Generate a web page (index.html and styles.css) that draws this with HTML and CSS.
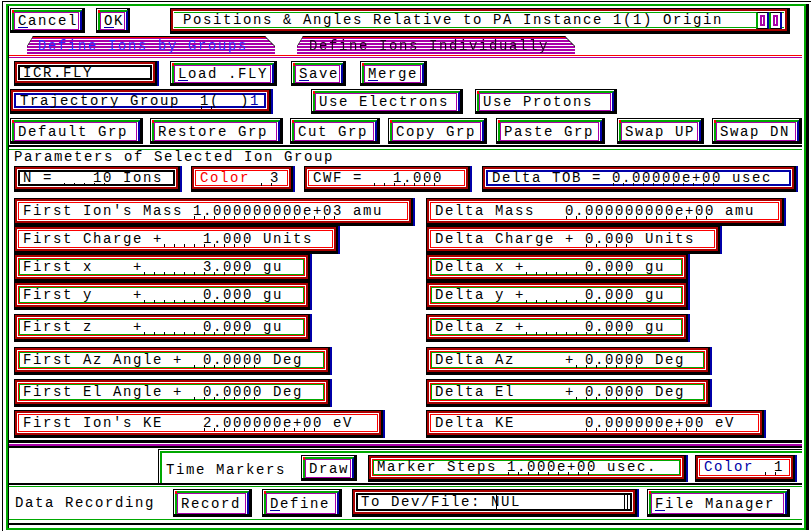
FILE: index.html
```html
<!DOCTYPE html>
<html>
<head>
<meta charset="utf-8">
<link rel="stylesheet" href="styles.css">
</head>
<body>
<div class="screen">
 <div class="frame">
  <div class="win">

   <div class="row r1">
    <div class="btn cancel"><div class="b2"><div class="b3"><span class="tx"><u>C</u>ancel</span></div></div></div>
    <div class="btn ok"><div class="b2"><div class="b3"><span class="tx"><u>O</u>K</span></div></div></div>
    <div class="title">
     <div class="ti">
      <div class="tin">
       <span class="tt">Positions &amp; Angles Relative to PA Instance 1(1) Origin</span>
       <span class="ic"><i></i></span><span class="ic"><i></i></span>
      </div>
     </div>
    </div>
   </div>

   <div class="row tabs">
    <div class="tab t1"><span>Define Ions by Groups</span></div>
    <div class="tab t2"><span>Define Ions Individually</span></div>
   </div>
   <div class="tabline"></div>

   <div class="row r3">
    <div class="fld k icr"><div class="f2"><div class="f3"><span class="tx">ICR.FLY</span></div></div></div>
    <div class="btn load"><div class="b2"><div class="b3"><span class="tx"><u>L</u>oad .FLY</span></div></div></div>
    <div class="btn save"><div class="b2"><div class="b3"><span class="tx"><u>S</u>ave</span></div></div></div>
    <div class="btn merge"><div class="b2"><div class="b3"><span class="tx"><u>M</u>erge</span></div></div></div>
   </div>

   <div class="row r4">
    <div class="fld bl traj"><div class="f2"><div class="f3"><span class="tx">Trajectory Group  <span class="t">1(</span>  )<span class="blue">1</span></span></div></div></div>
    <div class="btn elec"><div class="b2"><div class="b3"><span class="tx">Use Electrons</span></div></div></div>
    <div class="btn prot"><div class="b2"><div class="b3"><span class="tx">Use Protons</span></div></div></div>
   </div>

   <div class="row r5">
    <div class="btn w133"><div class="b2"><div class="b3"><span class="tx">Default Grp</span></div></div></div>
    <div class="btn w133 g7"><div class="b2"><div class="b3"><span class="tx">Restore Grp</span></div></div></div>
    <div class="btn w90 g7"><div class="b2"><div class="b3"><span class="tx">Cut Grp</span></div></div></div>
    <div class="btn w99 g8"><div class="b2"><div class="b3"><span class="tx">Copy Grp</span></div></div></div>
    <div class="btn w109 g9"><div class="b2"><div class="b3"><span class="tx">Paste Grp</span></div></div></div>
    <div class="btn w87 g12"><div class="b2"><div class="b3"><span class="tx">Swap UP</span></div></div></div>
    <div class="btn w90 g8"><div class="b2"><div class="b3"><span class="tx">Swap DN</span></div></div></div>
   </div>

   <div class="sep1"></div>
   <div class="plabel">Parameters of Selected Ion Group</div>

   <div class="row rn">
    <div class="fld k nf"><div class="f2"><div class="f3"><span class="tx">N = <span class="t">   10</span> Ions</span></div></div></div>
    <div class="fld r colf"><div class="f2"><div class="f3"><span class="tx"><span class="red">Color</span> <span class="t"> 3</span></span></div></div></div>
    <div class="fld r cwf"><div class="f2"><div class="f3"><span class="tx">CWF = <span class="t">  1.000</span></span></div></div></div>
    <div class="fld bl tob"><div class="f2"><div class="f3"><span class="tx">Delta TOB = <span class="t">0.00000e+00</span> usec</span></div></div></div>
   </div>

   <div class="pair mass">
    <div class="fld r wl"><div class="f2"><div class="f3"><span class="tx">First Ion's Mass <span class="t">1.000000000e+03</span> amu</span></div></div></div>
    <div class="fld r wr"><div class="f2"><div class="f3"><span class="tx">Delta Mass   <span class="t">0.000000000e+00</span> amu</span></div></div></div>
   </div>
   <div class="pair chg">
    <div class="fld r wl"><div class="f2"><div class="f3"><span class="tx">First Charge +<span class="t">    1.000</span> Units</span></div></div></div>
    <div class="fld r wr"><div class="f2"><div class="f3"><span class="tx">Delta Charge + <span class="t">0.000</span> Units</span></div></div></div>
   </div>
   <div class="pair px">
    <div class="fld g wl"><div class="f2"><div class="f3"><span class="tx">First x    +<span class="t">      3.000</span> gu</span></div></div></div>
    <div class="fld g wr"><div class="f2"><div class="f3"><span class="tx">Delta x +<span class="t">      0.000</span> gu</span></div></div></div>
   </div>
   <div class="pair py">
    <div class="fld g wl"><div class="f2"><div class="f3"><span class="tx">First y    +<span class="t">      0.000</span> gu</span></div></div></div>
    <div class="fld g wr"><div class="f2"><div class="f3"><span class="tx">Delta y +<span class="t">      0.000</span> gu</span></div></div></div>
   </div>
   <div class="pair pz">
    <div class="fld g wl"><div class="f2"><div class="f3"><span class="tx">First z    +<span class="t">      0.000</span> gu</span></div></div></div>
    <div class="fld g wr"><div class="f2"><div class="f3"><span class="tx">Delta z +<span class="t">      0.000</span> gu</span></div></div></div>
   </div>
   <div class="pair az">
    <div class="fld g wl"><div class="f2"><div class="f3"><span class="tx">First Az Angle + <span class="t"> 0.0000</span> Deg</span></div></div></div>
    <div class="fld g wr"><div class="f2"><div class="f3"><span class="tx">Delta Az     +<span class="t"> 0.0000</span> Deg</span></div></div></div>
   </div>
   <div class="pair el">
    <div class="fld g wl"><div class="f2"><div class="f3"><span class="tx">First El Angle + <span class="t"> 0.0000</span> Deg</span></div></div></div>
    <div class="fld g wr"><div class="f2"><div class="f3"><span class="tx">Delta El     +<span class="t"> 0.0000</span> Deg</span></div></div></div>
   </div>
   <div class="pair ke">
    <div class="fld r wl"><div class="f2"><div class="f3"><span class="tx">First Ion's KE    <span class="t">2.000000e+00</span> eV</span></div></div></div>
    <div class="fld r wr"><div class="f2"><div class="f3"><span class="tx">Delta KE       <span class="t">0.000000e+00</span> eV</span></div></div></div>
   </div>

   <div class="sep2"></div>

   <div class="tm">
    <div class="tmp">
     <span class="lbl">Time Markers</span>
     <div class="btn draw"><div class="b2"><div class="b3"><span class="tx">Draw</span></div></div></div>
     <div class="fld g steps"><div class="f2"><div class="f3"><span class="tx">Marker Steps <span class="t">1.000e+00</span> usec.</span></div></div></div>
     <div class="fld r col1"><div class="f2"><div class="f3"><span class="tx"><span class="blue">Color</span> <span class="t"> 1</span></span></div></div></div>
    </div>
   </div>

   <div class="dr">
    <span class="lbl">Data Recording</span>
    <div class="btn rec"><div class="b2"><div class="b3"><span class="tx">Record</span></div></div></div>
    <div class="btn def"><div class="b2"><div class="b3"><span class="tx"><u>D</u>efine</span></div></div></div>
    <div class="fld k dev"><div class="f2"><div class="f3"><span class="tx">To Dev/File: <span class="cur">NUL</span></span><span class="endbars"></span></div></div></div>
    <div class="btn fm"><div class="b2"><div class="b3"><span class="tx"><u>F</u>ile Manager</span></div></div></div>
   </div>

  </div>
 </div>
</div>
</body>
</html>
```

FILE: styles.css
```css
:root {
  --g: #00a800;
  --b: #0000a8;
  --m: #a800a8;
  --dr: #a80000;
  --r: #fc0000;
}
* { box-sizing: border-box; }
body {
  margin: 0;
  background: #fff;
  color: #000;
  font-family: "Liberation Mono", "DejaVu Sans Mono", monospace;
  font-size: 14px;
  letter-spacing: 1.6px;
}
.screen {
  width: 811px;
  height: 531px;
  overflow: hidden;
  padding-left: 2px;
  padding-top: 1px;
}
.frame {
  height: 100%;
  border-left: 1px solid #000;
  border-top: 1px solid #000;
  padding: 2px 0 0 3px;
}
.win {
  width: 800px;
  height: 526px;
  border: 2px solid var(--g);
  box-shadow: inset 1px 0 0 #000, 3px 0 0 #000;
  padding-left: 1px;
  display: flex;
  flex-direction: column;
}
.row { display: flex; flex: none; }
.tx { white-space: pre; }
.blue { color: var(--b); }
.red { color: var(--r); }
u { text-decoration: none; border-bottom: 1px solid var(--b); line-height: 11px; display: inline-block; }

/* ticks under values */
.t {
  background: repeating-linear-gradient(90deg, transparent 0 1px, #000 1px 2px, transparent 2px 10px) left bottom / 100% 3px no-repeat;
}

/* ------- buttons ------- */
.btn {
  display: flex;
  height: 100%;
  border: 1px solid #000;
  border-right-width: 3px;
  border-bottom-width: 3px;
  background: #fff;
  padding: 1px 0 0 1px;
}
.b2 {
  flex: 1;
  display: flex;
  border-top: 2px solid var(--g);
  border-left: 2px solid var(--g);
  border-right: 2px solid var(--b);
  padding-right: 1px;
  position: relative;
}
.b2::before {
  content: "";
  position: absolute;
  left: -2px;
  top: -2px;
  width: 2px;
  height: 3px;
  background: var(--r);
}
.b3 {
  flex: 1;
  display: flex;
  align-items: center;
  border: 1px solid var(--m);
  padding-left: 3px;
}

/* ------- fields ------- */
.fld {
  display: flex;
  height: 100%;
  border: 1px solid #000;
  border-right-width: 2px;
  border-bottom-width: 3px;
  box-shadow: 2px 0 0 var(--b);
  background: #fff;
}
.f2 {
  flex: 1;
  display: flex;
  border: 2px solid var(--dr);
  padding: 1px;
}
.f3 {
  flex: 1;
  display: flex;
  align-items: center;
  border: 1px solid var(--r);
  padding-left: 4px;
}
.fld.k .f3 { border: 2px solid #000; padding-left: 3px; }
.fld.g .f3 { border: 1px solid var(--r); box-shadow: inset 0 0 0 1px var(--g); padding-left: 4px; }
.fld.bl .f3 { border: 2px solid var(--b); padding-left: 4px; }

/* ------- row 1 ------- */
.r1 { height: 26px; margin-top: 2px; }
.cancel { width: 75px; margin-left: 1px; height: 25px; }
.ok { width: 34px; margin-left: 11px; height: 25px; }
.title {
  width: 620px;
  margin-left: 40px;
  border: 1px solid #000;
  border-right-width: 3px;
  border-bottom-width: 3px;
  display: flex;
}
.ti { flex: 1; display: flex; border: 2px solid var(--dr); padding: 1px; }
.tin {
  flex: 1;
  display: flex;
  align-items: center;
  border-top: 1px solid var(--g);
  border-bottom: 1px solid var(--g);
  padding-left: 9px;
  padding-right: 2px;
}
.tt { flex: 1; white-space: pre; }
.ic {
  width: 13px;
  height: 17px;
  border: 1px solid #000;
  border-left: 2px solid var(--g);
  border-right: 2px solid var(--b);
  background: #fff;
  padding: 2px 2px;
  display: flex;
}
.ic i { flex: 1; border: 2px solid var(--m); }

/* ------- tabs ------- */
.tabs {
  height: 18px;
  margin-top: 3px;
  filter: drop-shadow(0 -1px 0 #000);
}
.tab {
  height: 18px;
  clip-path: polygon(6px 0, calc(100% - 10px) 0, 100% 10px, 100% 100%, 0 100%, 0 10px);
  background:
    linear-gradient(var(--r), var(--r)) top / 100% 1px no-repeat,
    repeating-linear-gradient(180deg, var(--m) 0 2px, #fff 2px 3px);
  display: flex;
  align-items: center;
  padding-left: 11px;
  white-space: pre;
}
.t1 { width: 248px; margin-left: 18px; color: #3030ff; }
.t2 { width: 278px; margin-left: 22px; color: #200020; padding-left: 12px; }
.tabline {
  flex: none;
  height: 3px;
  border-top: 1px solid var(--r);
  border-bottom: 1px solid var(--m);
  margin-right: 2px;
}

/* ------- row 3/4/5 ------- */
.r3 { height: 25px; margin-top: 3px; }
.icr { width: 143px; margin-left: 5px; }
.load { width: 107px; margin-left: 13px; }
.save { width: 55px; margin-left: 14px; }
.merge { width: 67px; margin-left: 14px; }

.r4 { height: 25px; margin-top: 3px; }
.traj { width: 261px; margin-left: 1px; }
.elec { width: 152px; margin-left: 40px; }
.prot { width: 142px; margin-left: 12px; }

.r5 { height: 26px; margin-top: 4px; padding-left: 1px; }
.w133 { width: 133px; }
.w90 { width: 90px; }
.w99 { width: 99px; }
.w109 { width: 109px; }
.w87 { width: 87px; }
.g7 { margin-left: 7px; }
.g8 { margin-left: 8px; }
.g9 { margin-left: 9px; }
.g12 { margin-left: 12px; }

.sep1 {
  flex: none;
  height: 5px;
  margin-top: 1px;
  border-top: 2px solid #000;
  border-bottom: 1px solid var(--g);
  margin-right: 2px;
}
.plabel { flex: none; height: 14px; line-height: 14px; padding-left: 5px; white-space: pre; }

.rn { height: 26px; margin-top: 2px; padding-left: 5px; }
.nf { width: 166px; }
.colf { width: 102px; margin-left: 11px; }
.cwf { width: 166px; margin-left: 11px; }
.tob { width: 314px; margin-left: 12px; }

.pair {
  flex: none;
  display: grid;
  grid-template-columns: 412px auto;
  justify-content: start;
  padding-left: 5px;
  height: 25px;
}
.pair .fld { height: 100%; }
.mass { margin-top: 6px; }
.mass .wl { width: 399px; } .mass .wr { width: 358px; }
.chg { margin-top: 3px; }
.chg .wl { width: 324px; } .chg .wr { width: 294px; }
.px { margin-top: 3px; height: 26px; }
.py { margin-top: 2px; height: 26px; }
.pz { margin-top: 6px; height: 26px; }
.px .wl, .py .wl, .pz .wl { width: 296px; }
.px .wr, .py .wr, .pz .wr { width: 262px; }
.az { margin-top: 7px; height: 26px; }
.el { margin-top: 6px; height: 26px; }
.az .wl, .el .wl { width: 316px; }
.az .wr, .el .wr { width: 284px; }
.ke { margin-top: 5px; height: 27px; }
.ke .wl { width: 369px; } .ke .wr { width: 338px; }

.sep2 {
  flex: none;
  height: 8px;
  margin-top: 3px;
  border-top: 3px solid #000;
  border-bottom: 2px solid #000;
  background: linear-gradient(var(--m), var(--m)) 0 1px / 100% 2px no-repeat;
  margin-right: 2px;
}

/* ------- time markers ------- */
.tm {
  flex: none;
  height: 37px;
  padding-left: 149px;
  padding-top: 1px;
  border-bottom: 2px solid #000;
  margin-right: 2px;
}
.tmp {
  height: 34px;
  display: flex;
  align-items: center;
  border-left: 1px solid #000;
  border-top: 1px solid #000;
  box-shadow: inset 1px 1px 0 #fff, inset 3px 3px 0 var(--g);
  padding: 4px 0 1px 7px;
}
.tmp .lbl { white-space: pre; width: 135px; padding-top: 4px; }
.draw { width: 56px; height: 26px; }
.steps { width: 318px; margin-left: 11px; height: 27px; }
.col1 { width: 100px; margin-left: 9px; height: 27px; }

/* ------- data recording ------- */
.dr {
  flex: none;
  height: 34px;
  display: flex;
  align-items: center;
  border-top: 1px solid var(--g);
  border-bottom: 1px solid var(--g);
  margin-top: 1px;
  margin-right: 2px;
  padding-left: 6px;
  box-shadow: 0 3px 0 #fff, 0 5px 0 #000;
}
.dr .lbl { white-space: pre; width: 158px; }
.dr .btn, .dr .fld { height: 28px; }
.rec { width: 79px; }
.def { width: 80px; margin-left: 10px; }
.dev { width: 285px; margin-left: 10px; }
.fm { width: 143px; margin-left: 10px; }
.cur { background: linear-gradient(90deg, transparent 5px, #000 5px 6px, transparent 6px); }
.endbars {
  flex: 1;
  align-self: stretch;
  background: linear-gradient(90deg, transparent calc(100% - 6px), #000 calc(100% - 6px) calc(100% - 5px), transparent calc(100% - 5px) calc(100% - 3px), #000 calc(100% - 3px) calc(100% - 2px), transparent calc(100% - 2px));
}
```
